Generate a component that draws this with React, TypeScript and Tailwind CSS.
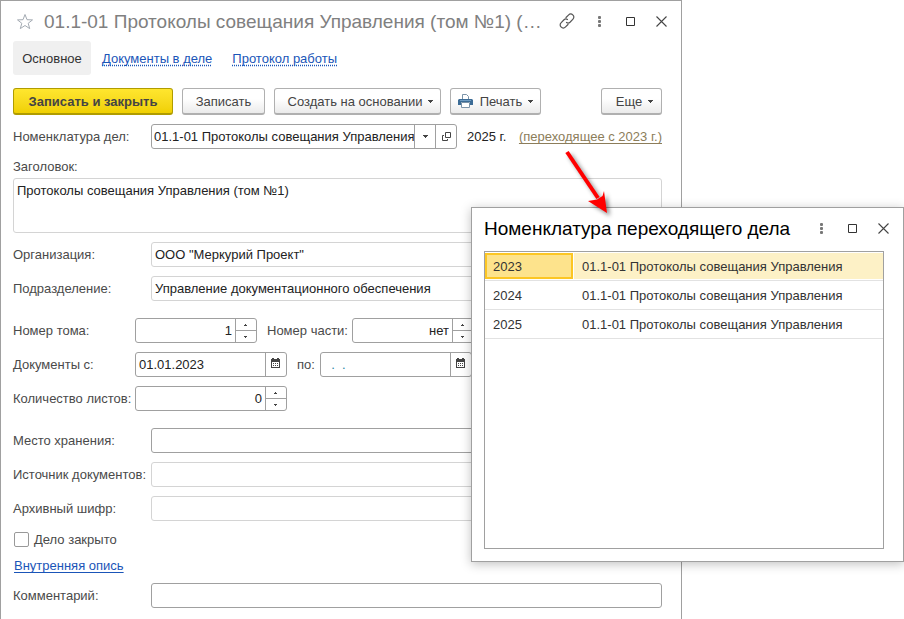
import { useState, type ReactNode } from 'react'
import clsx from 'clsx'

const box = 'flex h-[25px] overflow-hidden rounded-[3px] border bg-white'
const strong = 'border-[#a0a0a0]'
const soft = 'border-[#d4d4d4]'
const field = 'min-w-0 flex-1 bg-transparent outline-none'

const rows = [
  { year: '2023', name: '01.1-01 Протоколы совещания Управления' },
  { year: '2024', name: '01.1-01 Протоколы совещания Управления' },
  { year: '2025', name: '01.1-01 Протоколы совещания Управления' },
]

function Caret() {
  return (
    <svg width="5" height="3" viewBox="0 0 5 3" fill="#444" aria-hidden="true">
      <path d="M0 0h5v1H4v1H3v1H2V2H1V1H0z" />
    </svg>
  )
}

function ToolButton({ children, className }: { children: ReactNode; className?: string }) {
  return (
    <button
      type="button"
      className={clsx(
        'flex h-[27px] items-center justify-center rounded-[3px] border border-b-2 border-[#b0b0b0] bg-linear-to-b from-white from-40% to-[#ebebeb] text-[#444]',
        className
      )}
    >
      {children}
    </button>
  )
}

function WindowButtons() {
  return (
    <div className="flex">
      <button type="button" aria-label="Ещё" className="flex h-6 w-[31px] items-center justify-center">
        <svg width="3" height="11" viewBox="0 0 3 11" fill="#777">
          <rect width="3" height="3" rx="1" />
          <rect y="4" width="3" height="3" rx="1" />
          <rect y="8" width="3" height="3" rx="1" />
        </svg>
      </button>
      <button type="button" aria-label="Развернуть" className="flex h-6 w-[31px] items-center justify-center">
        <svg width="9" height="9" viewBox="0 0 9 9" fill="none" stroke="#333">
          <path d="M.5.5h8v8h-8z" />
        </svg>
      </button>
      <button type="button" aria-label="Закрыть" className="flex h-6 w-[31px] items-center justify-center">
        <svg width="11" height="11" viewBox="0 0 11 11" fill="none" stroke="#444" strokeWidth="1.1">
          <path d="M.5.5l10 10M10.5.5l-10 10" />
        </svg>
      </button>
    </div>
  )
}

function TextRow({ id, label, value = '', dark }: { id: string; label: string; value?: string; dark?: boolean }) {
  return (
    <div className="flex items-center">
      <label htmlFor={id} className="w-[138px] shrink-0">
        {label}
      </label>
      <div className={clsx(box, 'flex-1', dark ? strong : soft)}>
        <input id={id} defaultValue={value} className={clsx(field, 'px-[3px] text-[#222]')} />
      </div>
    </div>
  )
}

function NumberBox({ id, value, className }: { id: string; value: string; className: string }) {
  return (
    <div className={clsx(box, strong, className)}>
      <input id={id} defaultValue={value} className={clsx(field, 'px-[3px] text-right text-[#222]')} />
      <div className="flex w-[21px] flex-col border-l border-[#a0a0a0]">
        <button type="button" aria-label="Больше" className="flex flex-1 items-center justify-center pr-px">
          <svg width="3" height="2" viewBox="0 0 3 2" fill="#444">
            <path d="M1 0h1v1h1v1H0V1h1z" />
          </svg>
        </button>
        <button
          type="button"
          aria-label="Меньше"
          className="flex flex-1 items-center justify-center border-t border-[#a0a0a0] pr-px"
        >
          <svg width="3" height="2" viewBox="0 0 3 2" fill="#444">
            <path d="M0 0h3v1H2v1H1V1H0z" />
          </svg>
        </button>
      </div>
    </div>
  )
}

function DateBox({ id, value, empty }: { id: string; value: string; empty?: boolean }) {
  return (
    <div className={clsx(box, strong, 'w-[152px]')}>
      <input
        id={id}
        defaultValue={value}
        className={clsx(field, 'px-[3px]', empty ? 'text-[#2a86a8]' : 'text-[#222]')}
      />
      <button
        type="button"
        aria-label="Выбрать дату"
        className="flex w-[21px] items-center justify-center border-l border-[#a0a0a0] pr-px pb-[3px]"
      >
        <svg width="9" height="10" viewBox="0 0 9 10" fill="#444">
          <path d="M0 1h1V0h2v1h3V0h2v1h1v3H0z" />
          <path d="M0 4h1v5h7V4h1v6H0z" />
          <path d="M2 5h1v1H2zM4 5h1v1H4zM6 5h1v1H6zM2 7h1v1H2zM4 7h1v1H4zM6 7h1v1H6z" />
        </svg>
      </button>
    </div>
  )
}

function CaseForm() {
  return (
    <main className="mr-[222px] min-h-screen border border-b-0 border-[#a0a0a0] pr-[19px] pl-3 text-[#4a4a4a]">
      <header className="-mr-[15px] flex h-10 items-center">
        <button type="button" aria-label="В избранное" className="mr-[10px] ml-[3px]">
          <svg width="18" height="17" viewBox="0 0 18 17" fill="none" stroke="#a4abb3">
            <path d="M9 1.500l2 5.200 5.500.2-4.300 3.400 1.500 5.300L9 12.500l-4.700 3.100 1.500-5.300L1.500 6.900l5.500-.2z" />
          </svg>
        </button>
        <h1 className="min-w-0 flex-1 text-[19px] whitespace-nowrap text-[#808080]">
          01.1-01 Протоколы совещания Управления (том №1) (…
        </h1>
        <button type="button" aria-label="Ссылка" className="flex h-6 w-[35px] items-center justify-center">
          <svg
            width="16"
            height="16"
            viewBox="0 0 16 16"
            fill="none"
            stroke="#555"
            strokeWidth="1.2"
            strokeLinecap="round"
          >
            <path d="M7 4.500l2.700-2.700a2.800 2.800 0 0 1 4 0l.3.300a2.800 2.800 0 0 1 0 4L11 9.200a2.800 2.800 0 0 1-3.500.3" />
            <path d="M9 11.500l-2.700 2.700a2.800 2.800 0 0 1-4 0l-.3-.3a2.800 2.800 0 0 1 0-4L5 6.800a2.800 2.800 0 0 1 3.500-.3" />
          </svg>
        </button>
        <WindowButtons />
      </header>

      <nav className="flex h-[34px] items-center text-[#1a55b8]">
        <a href="#main" className="flex h-full w-[78px] items-center justify-center rounded-[3px] bg-[#f0f0f0] text-[#333]">
          Основное
        </a>
        <a href="#docs" className="ml-[11px] underline decoration-dotted underline-offset-2 [text-decoration-skip-ink:none]">
          Документы в деле
        </a>
        <a href="#log" className="ml-5 underline decoration-dotted underline-offset-2 [text-decoration-skip-ink:none]">
          Протокол работы
        </a>
      </nav>

      <div className="mt-[13px] flex gap-[9px]">
        <button
          type="button"
          className="h-[27px] w-40 rounded-[3px] border border-b-2 border-[#b09c00] bg-linear-to-b from-[#ffe62e] to-[#f0d000] font-bold text-[#444]"
        >
          Записать и закрыть
        </button>
        <ToolButton className="w-[83px]">Записать</ToolButton>
        <ToolButton className="w-[167px] gap-[6px] pl-[6px]">
          Создать на основании <Caret />
        </ToolButton>
        <ToolButton className="w-[91px] gap-[6px]">
          <svg width="15" height="14" viewBox="0 0 15 14" className="mr-px" aria-hidden="true">
            <path d="M4.500 5V.5h4l2 2V5" fill="#fff" stroke="#7b93a8" />
            <path d="M1 5h13l1 1v5h-3V8H3v3H0V6z" fill="#3c6c96" />
            <path d="M2 6h11v1H2z" fill="#6f9cc2" />
            <path d="M3.500 8.500h8v5h-8z" fill="#fff" stroke="#7b93a8" />
          </svg>
          Печать <Caret />
        </ToolButton>
        <ToolButton className="ml-auto w-[61px] gap-[6px] pl-[6px]">
          Еще <Caret />
        </ToolButton>
      </div>

      <form className="mt-[9px] flex flex-col gap-[9px]">
        <div className="flex items-center">
          <label htmlFor="nomenclature" className="w-[138px] shrink-0">
            Номенклатура дел:
          </label>
          <div className={clsx(box, strong, 'w-[306px]')}>
            <input
              id="nomenclature"
              defaultValue="01.1-01 Протоколы совещания Управления"
              className={clsx(field, 'pl-[2px] text-[#222]')}
            />
            <button
              type="button"
              aria-label="Выбрать"
              className="flex w-[21px] items-center justify-center border-l border-[#a0a0a0]"
            >
              <Caret />
            </button>
            <button
              type="button"
              aria-label="Открыть"
              className="flex w-[21px] items-center justify-center border-l border-[#a0a0a0]"
            >
              <svg width="9" height="9" viewBox="0 0 9 9" fill="none" stroke="#444">
                <path d="M3.500.5h5v5h-5z" />
                <path d="M2 3.500H.5v5h5V7" />
              </svg>
            </button>
          </div>
          <span className="ml-[10px] whitespace-nowrap text-[#222]">2025 г.</span>
          <a
            href="#transition"
            className="ml-auto whitespace-nowrap text-[#8c7d5a] underline underline-offset-2 [text-decoration-skip-ink:none]"
          >
            (переходящее с 2023 г.)
          </a>
        </div>

        <div>
          <label htmlFor="caption" className="block h-5 leading-[18px]">
            Заголовок:
          </label>
          <textarea
            id="caption"
            defaultValue="Протоколы совещания Управления (том №1)"
            className="block h-[55px] w-full resize-none rounded-[3px] border border-[#d4d4d4] px-[3px] py-1 text-[#222] outline-none"
          />
        </div>

        <TextRow id="org" label="Организация:" value='ООО "Меркурий Проект"' />
        <TextRow id="dept" label="Подразделение:" value="Управление документационного обеспечения" />

        <div className="mt-2 flex items-center">
          <label htmlFor="volume" className="w-[122px] shrink-0">
            Номер тома:
          </label>
          <NumberBox id="volume" value="1" className="w-[122px]" />
          <label htmlFor="part" className="ml-[10px] w-[85px]">
            Номер части:
          </label>
          <NumberBox id="part" value="нет" className="w-[122px]" />
        </div>
        <div className="flex items-center">
          <label htmlFor="from" className="w-[122px] shrink-0">
            Документы с:
          </label>
          <DateBox id="from" value="01.01.2023" />
          <label htmlFor="to" className="ml-[10px] w-[23px]">
            по:
          </label>
          <DateBox id="to" value="  .  ." empty />
        </div>
        <div className="flex items-center">
          <label htmlFor="sheets" className="w-[122px] shrink-0 whitespace-nowrap">
            Количество листов:
          </label>
          <NumberBox id="sheets" value="0" className="w-[152px]" />
        </div>

        <div className="mt-2">
          <TextRow id="place" label="Место хранения:" dark />
        </div>
        <TextRow id="source" label="Источник документов:" />
        <TextRow id="cipher" label="Архивный шифр:" />

        <div className="flex flex-col items-start gap-2">
          <label className="flex h-[18px] items-center gap-[5px] pl-px">
            <input
              type="checkbox"
              className="size-[15px] appearance-none rounded-[2px] border border-[#999] bg-white checked:bg-[#ffe62e]"
            />
            Дело закрыто
          </label>
          <a
            href="#inventory"
            className="ml-px h-[18px] leading-5 text-[#1a55b8] underline underline-offset-2 [text-decoration-skip-ink:none]"
          >
            Внутренняя опись
          </a>
        </div>
        <TextRow id="comment" label="Комментарий:" dark />
      </form>
    </main>
  )
}

function TransitionDialog() {
  const [selected, setSelected] = useState('2023')

  return (
    <section
      role="dialog"
      aria-labelledby="dialog-title"
      className="absolute top-[207px] right-0 flex h-[355px] w-[433px] flex-col border border-[#a0a0a0] bg-white pr-[19px] pb-3 pl-3 shadow-[0_2px_10px_rgba(0,0,0,0.25)]"
    >
      <header className="-mr-[15px] flex h-[43px] items-center justify-between pb-[2px]">
        <h2 id="dialog-title" className="text-[19px] whitespace-nowrap text-black">
          Номенклатура переходящего дела
        </h2>
        <WindowButtons />
      </header>
      <div className="flex-1 border border-[#a0a0a0]">
        <table className="w-full table-fixed border-collapse text-[#333]">
          <colgroup>
            <col className="w-[89px]" />
            <col />
          </colgroup>
          <tbody>
            {rows.map((r) => {
              const active = r.year === selected
              return (
                <tr key={r.year} onClick={() => setSelected(r.year)} className="border-b border-[#e2e2e2]">
                  <td className="py-px pr-px pl-0">
                    <div
                      className={clsx(
                        'flex h-[26px] items-center border-2 px-[6px]',
                        active ? 'border-[#fcc624] bg-[#fde38c]' : 'border-transparent'
                      )}
                    >
                      {r.year}
                    </div>
                  </td>
                  <td className="px-0 py-px">
                    <div className={clsx('flex h-[26px] items-center px-2', active && 'bg-[#fdf1c6]')}>{r.name}</div>
                  </td>
                </tr>
              )
            })}
          </tbody>
        </table>
      </div>
    </section>
  )
}

export default function App() {
  return (
    <div className="relative min-h-screen overflow-hidden bg-white font-['Liberation_Sans',Arial,sans-serif] text-[13px] leading-[15px]">
      <CaseForm />
      <TransitionDialog />
      <svg
        width="60"
        height="75"
        viewBox="0 0 60 75"
        className="pointer-events-none absolute top-[147px] right-[284px] drop-shadow-[3px_3px_2px_rgba(0,0,0,0.45)]"
        aria-hidden="true"
      >
        <path d="M7 5l31 46" stroke="#f00" strokeWidth="4" />
        <path d="M47 66L28 54l9-1.500 5.500-3.500L44 44z" fill="#f00" />
      </svg>
    </div>
  )
}
